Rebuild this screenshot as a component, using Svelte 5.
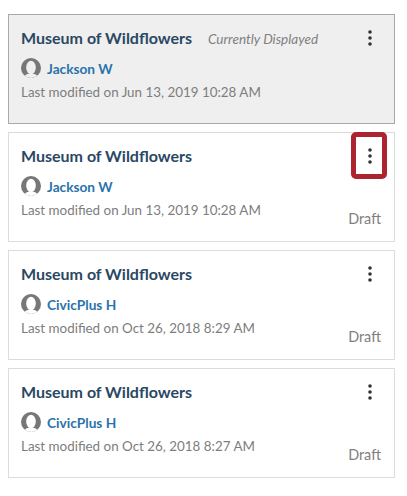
<script>
  const cards = [
    { author: 'Jackson W', date: 'Jun 13, 2019 10:28 AM', current: true },
    { author: 'Jackson W', date: 'Jun 13, 2019 10:28 AM', focus: true },
    { author: 'CivicPlus H', date: 'Oct 26, 2018 8:29 AM' },
    { author: 'CivicPlus H', date: 'Oct 26, 2018 8:27 AM' }
  ];
</script>

<div class="list">
  {#each cards as c}
    <article class="card" class:current={c.current}>
      <div class="top">
        <h3>Museum of Wildflowers</h3>
        {#if c.current}<em>Currently Displayed</em>{/if}
      </div>
      <div class="author">
        <svg class="avatar" viewBox="0 0 20 20" width="20" height="20">
          <defs>
            <clipPath id="round"><circle cx="10" cy="10" r="10" /></clipPath>
          </defs>
          <g clip-path="url(#round)">
            <rect width="20" height="20" fill="#777" />
            <ellipse cx="10" cy="9.5" rx="4.800" ry="6.800" fill={c.current ? '#efefef' : '#fff'} />
            <path d="M2 21c1-4 4-5.500 8-5.500s7 1.500 8 5.500z" fill={c.current ? '#efefef' : '#fff'} />
          </g>
        </svg>
        <span class="name">{c.author}</span>
      </div>
      <p class="date">Last modified on {c.date}</p>
      <button class="menu" class:focus={c.focus} aria-label="More options">
        <svg viewBox="0 0 4 16" width="4" height="16">
          <circle cx="2" cy="2" r="1.8" />
          <circle cx="2" cy="8" r="1.8" />
          <circle cx="2" cy="14" r="1.8" />
        </svg>
      </button>
      {#if !c.current}<span class="status">Draft</span>{/if}
    </article>
  {/each}
</div>

<style>
  :global(body) {
    margin: 0;
    background: #fff;
    font-family: Lato, "Open Sans", sans-serif;
  }
  .list {
    display: flex;
    flex-direction: column;
    gap: 8px;
    padding: 14px 12px 18px 8px;
  }
  .card {
    position: relative;
    box-sizing: border-box;
    height: 110px;
    padding: 11px 12px 0 12px;
    border: 1px solid #dcdcdc;
    background: #fff;
  }
  .card.current {
    background: #efefef;
    border-color: #a9a9a9;
  }
  .top {
    display: flex;
    align-items: baseline;
    gap: 16px;
    height: 24px;
  }
  h3 {
    margin: 0;
    font-size: 16px;
    line-height: 24px;
    font-weight: 700;
    color: #2a4864;
  }
  em {
    font-size: 13.500px;
    color: #808080;
  }
  .author {
    display: flex;
    align-items: center;
    gap: 6px;
    margin-top: 7px;
    height: 22px;
  }
  .avatar {
    flex: none;
  }
  .name {
    font-size: 13.700px;
    font-weight: 700;
    color: #2a72ab;
  }
  .date {
    margin: 3px 0 0;
    font-size: 13.400px;
    line-height: 20px;
    color: #7d7d7d;
  }
  .menu {
    position: absolute;
    top: 0;
    right: 0;
    width: 0;
    height: 0;
    padding: 0;
    border: 0;
    background: none;
  }
  .menu svg {
    position: absolute;
    top: 15px;
    right: 22px;
    fill: #333;
  }
  .menu.focus::before {
    content: "";
    position: absolute;
    top: -1px;
    right: 7px;
    width: 26px;
    height: 37px;
    border: 5px solid #ac2430;
    border-radius: 5px;
    background: #fff;
  }
  .status {
    position: absolute;
    right: 13px;
    bottom: 13px;
    font-size: 14.400px;
    line-height: 18px;
    color: #808080;
  }
</style>
